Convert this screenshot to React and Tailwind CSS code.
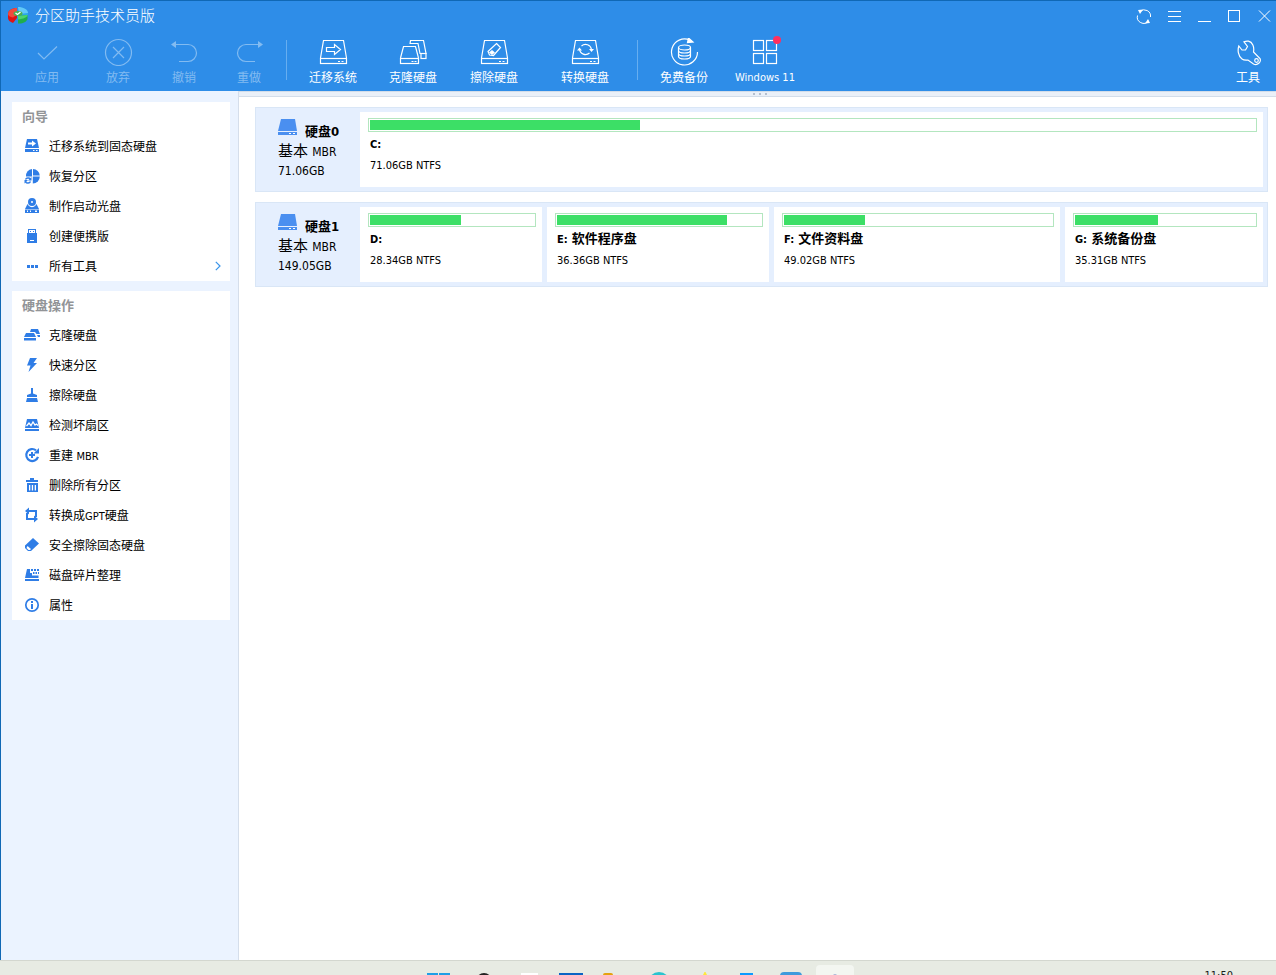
import { useState } from 'react';
import clsx from 'clsx';

// outline of a hard disk, shared by several toolbar icons
function DriveOutline() {
  return (
    <>
      <path d="M1.5 20L4.5 2.5h20L27.5 20" />
      <rect x="1.5" y="20.5" width="26" height="5" />
      <path d="M19 23.5h2M22.5 23.5h2" />
    </>
  );
}

function ToolIcon({ children }) {
  return (
    <svg width="30" height="28" viewBox="-1 0 30 28" fill="none" stroke="currentColor" strokeWidth="1.2" aria-hidden="true">
      {children}
    </svg>
  );
}

const editTools = [
  { label: '应用', width: 'w-[66px]', icon: <path d="M5 15l6 6L24 8.500" /> },
  {
    label: '放弃',
    width: 'w-[76px]',
    icon: (
      <>
        <circle cx="14.500" cy="14.500" r="13" />
        <path d="M9 9l11 11M20 9L9 20" />
      </>
    ),
  },
  {
    label: '撤销',
    width: 'w-[56px]',
    icon: (
      <>
        <path d="M5 6.500h13a8.500 8.500 0 0 1 0 17H9" />
        <path d="M1 6.500L6 3v7z" fill="currentColor" stroke="none" />
      </>
    ),
  },
  {
    label: '重做',
    width: 'w-[74px]',
    icon: (
      <>
        <path d="M23 6.500H11a8.500 8.500 0 0 0 0 17h9" />
        <path d="M28 6.500L23 3v7z" fill="currentColor" stroke="none" />
      </>
    ),
  },
];

const diskTools = [
  {
    label: '迁移系统',
    width: 'w-[80px]',
    icon: (
      <>
        <DriveOutline />
        <path d="M7.500 9.500h8v-3l6 5-6 5v-3h-8z" />
      </>
    ),
  },
  {
    label: '克隆硬盘',
    width: 'w-[80px]',
    icon: (
      <>
        <path d="M1.500 20L4.500 8.500h12L19.500 20" />
        <rect x="1.500" y="20.500" width="18" height="5" />
        <path d="M12.500 23.500h2M15.500 23.500h2" />
        <path d="M11 6l.5-3.500h13l2.500 13h-6L19 5.500h-8" />
        <rect x="22" y="15.500" width="5" height="5" />
      </>
    ),
  },
  {
    label: '擦除硬盘',
    width: 'w-[82px]',
    icon: (
      <>
        <DriveOutline />
        <path d="M16.500 5.500l4 4-7 8-4-.5-1.500-3.500z" />
        <path d="M12 12l3 2.500-3 2.500-3-2.500z" fill="currentColor" stroke="none" />
      </>
    ),
  },
  {
    label: '转换硬盘',
    width: 'w-[100px]',
    icon: (
      <>
        <DriveOutline />
        <path d="M10.500 8a6 6 0 0 1 10 3.500M18.500 15a6 6 0 0 1-10-4" />
        <path d="M18 11h5l-2.500 3zM6 12.500h5l-2.500-3z" fill="currentColor" stroke="none" />
      </>
    ),
  },
];

const extraTools = [
  {
    label: '免费备份',
    width: 'w-[80px]',
    icon: (
      <>
        <path d="M20 2.200A13 13 0 1 0 27.500 14" />
        <path d="M18.500 0L23 4l-5.500.5z" fill="currentColor" />
        <ellipse cx="14.500" cy="9.500" rx="6" ry="2.500" />
        <path d="M8.500 9.500v9c0 3.300 12 3.300 12 0v-9M8.500 12.500c0 3.300 12 3.300 12 0M8.500 15.500c0 3.300 12 3.300 12 0" />
      </>
    ),
  },
  {
    label: 'Windows 11',
    width: 'w-[82px]',
    dot: true,
    icon: (
      <>
        <rect x="2.500" y="2.500" width="10" height="10" />
        <rect x="15.500" y="2.500" width="10" height="10" />
        <rect x="2.500" y="15.500" width="10" height="10" />
        <rect x="15.500" y="15.500" width="10" height="10" />
      </>
    ),
  },
];

const settingsTool = {
  label: '工具',
  width: 'w-[56px]',
  icon: (
    <>
      <path d="M10 3.800L13.500 8.500 11.500 12H8L4.800 8C3.500 12 4 18 8 21c2 1.500 4 1.200 6 1l5.500 4c4 2 8-2 6.500-5.500L19.500 14C20.500 9 18.500 4 14.500 3.200c-2-.4-3 0-4.500.6z" />
      <circle cx="22.500" cy="22.500" r="1.800" />
    </>
  ),
};

const wizardItems = [
  {
    label: '迁移系统到固态硬盘',
    icon: (
      <>
        <path d="M3 1h10l2 9H1z" />
        <path d="M1 11h14v3H1z" />
        <path d="M4 4.500h4V2.500l4 3-4 3v-2H4zM9 12h1.500v1H9zM12 12h1.500v1H12z" fill="#fff" />
      </>
    ),
  },
  {
    label: '恢复分区',
    icon: (
      <>
        <path d="M8 1v7.500H2A6.800 6.800 0 0 1 8 1z" />
        <path d="M9 1a6.800 6.800 0 0 1 6.800 6.500H9z" />
        <path d="M15.800 8.500a7 7 0 0 1-7 7V8.500z" />
        <path d="M1.500 11.500a3 3 0 0 1 5-.5M6.500 13.500a3 3 0 0 1-5 .5" fill="none" stroke="currentColor" strokeWidth="1.500" />
        <path d="M7.500 9v3.500H4zM.5 15.500V12H4z" />
      </>
    ),
  },
  {
    label: '制作启动光盘',
    icon: (
      <>
        <path d="M3.500 6L1 11h14l-2.500-5-1 1.500a4.500 4.500 0 0 1-7 0z" />
        <path d="M8 0a4 4 0 1 0 0 8 4 4 0 0 0 0-8zm0 3a1 1 0 1 1 0 2 1 1 0 0 1 0-2z" fillRule="evenodd" />
        <path d="M1 11.500h14V15H1z" />
        <path d="M3 12.500h1V14H3zM6 12.500h1V14H6zM11 12.500h2V14h-2z" fill="#fff" />
      </>
    ),
  },
  {
    label: '创建便携版',
    icon: (
      <>
        <path d="M4 1h8v4h1v10H3V5h1z" />
        <path d="M5 2h6v3H5z" fill="#fff" />
        <path d="M6 3h1v1H6zM9 3h1v1H9z" />
        <path d="M6 12h4v1H6z" fill="#fff" />
      </>
    ),
  },
  { label: '所有工具', more: true, icon: <path d="M3 7h3v3H3zM7 7h3v3H7zM11 7h3v3h-3z" /> },
];

const diskItems = [
  {
    label: '克隆硬盘',
    icon: (
      <>
        <path d="M7 2h7l2 5h-3.500L11 5H6zM13 8h3v2h-2zM2 6h8l2 4H0z" />
        <path d="M0 11h12v2.500H0z" />
      </>
    ),
  },
  { label: '快速分区', icon: <path d="M6 1h7L9.500 6H13L4.500 15l2-6.500H3z" /> },
  { label: '擦除硬盘', icon: <path d="M7 1h2v5.500l4 1.500v2H3V8l4-1.500zM3 11h10l1 4H2z" /> },
  {
    label: '检测坏扇区',
    icon: (
      <>
        <path d="M3 2h10l2 9H1zM1 12h14v2H1z" />
        <path d="M2.500 9L5 6l2 2.500L9 5l2 3 1.500-1 1.500 1.500" fill="none" stroke="#fff" strokeWidth="1.300" />
      </>
    ),
  },
  {
    label: '重建',
    latin: 'MBR',
    spaced: true,
    icon: (
      <>
        <path d="M12 3.300a6 6 0 1 0 2 6.500" fill="none" stroke="currentColor" strokeWidth="2.200" />
        <path d="M15 1v5.500H9.500z" />
        <path d="M7 5h2v2h2v2H9v2H7V9H5V7h2z" />
      </>
    ),
  },
  { label: '删除所有分区', icon: <path d="M6 1h4v2h4v2H2V3h4zM3 6h11v9H3zm2 2v5.500h1.300V8zm2.800 0v5.500h1.300V8zm2.900 0v5.500H12V8z" fillRule="evenodd" /> },
  {
    label: '转换成',
    latin: 'GPT',
    tail: '硬盘',
    icon: (
      <>
        <path d="M3 6v6h7M5 4h7v6" fill="none" stroke="currentColor" strokeWidth="2" />
        <path d="M1 4l4-3.500v7zM14 12l-4 3.500v-7z" />
      </>
    ),
  },
  {
    label: '安全擦除固态硬盘',
    icon: (
      <>
        <path d="M9 1l6 5.500L7 14H4L1 11V8.500z" />
        <path d="M3.500 9L7 12l-1 1H4.500L2.500 11z" fill="#fff" />
      </>
    ),
  },
  {
    label: '磁盘碎片整理',
    icon: (
      <>
        <path d="M3 2h3v4h2v2.500h6.500V11H1zM1 12h14v2H1z" />
        <path d="M7 2h2v2H7zM10 2h2v2h-2zM13 2h2v2h-2zM9 5h1.500v2H9zM11.500 5h1.500v2h-1.500zM14 5h1v2h-1z" />
      </>
    ),
  },
  {
    label: '属性',
    icon: (
      <>
        <circle cx="8" cy="8" r="6.200" fill="none" stroke="currentColor" strokeWidth="1.700" />
        <path d="M7 4h2v2H7zM7 7h2v5H7z" />
      </>
    ),
  },
];

const disks = [
  {
    name: '硬盘0',
    size: '71.06GB',
    partitions: [{ letter: 'C:', name: '', size: '71.06GB NTFS', weight: 1, used: 30.5 }],
  },
  {
    name: '硬盘1',
    size: '149.05GB',
    partitions: [
      { letter: 'D:', name: '', size: '28.34GB NTFS', weight: 182, used: 55.5 },
      { letter: 'E:', name: '软件程序盘', size: '36.36GB NTFS', weight: 222, used: 83.3 },
      { letter: 'F:', name: '文件资料盘', size: '49.02GB NTFS', weight: 286, used: 30.2 },
      { letter: 'G:', name: '系统备份盘', size: '35.31GB NTFS', weight: 198, used: 46.1 },
    ],
  },
];

const windowButtons = [
  {
    label: '刷新',
    icon: (
      <>
        <path d="M4 3.500A6.300 6.300 0 0 1 14.500 9M12.500 13A6.300 6.300 0 0 1 1.500 7.500" />
        <path d="M2 2l5-.5L4 6zM14 15l-5 .5 3-4.500z" fill="currentColor" stroke="none" />
      </>
    ),
  },
  { label: '菜单', icon: <path d="M2 3.500h13M2 8.500h13M2 13.500h13" /> },
  { label: '最小化', icon: <path d="M2 13.500h13" /> },
  { label: '最大化', icon: <rect x="2.500" y="2.500" width="11" height="11" /> },
  { label: '关闭', icon: <path d="M3 2.500l11 11M14 2.500L3 13.500" /> },
];

function ToolButton({ tool, disabled }) {
  return (
    <button
      type="button"
      disabled={disabled}
      className={clsx('flex flex-col items-center gap-1 pt-[7px]', tool.width, disabled ? 'text-[#82bbf1]' : 'text-white')}
    >
      <span className="relative">
        <ToolIcon>{tool.icon}</ToolIcon>
        {tool.dot && <span className="absolute -top-0.5 -right-px size-2 rounded-full bg-[#ff2f5f]" />}
      </span>
      <span className={clsx('whitespace-nowrap leading-4', tool.dot ? 'text-[11px]' : 'text-xs')}>{tool.label}</span>
    </button>
  );
}

function Separator() {
  return <span className="mt-[9px] h-10 w-px bg-[#67aef0]" />;
}

function Header() {
  return (
    <header className="border-t border-[#1068b5] bg-[#2e8de8] text-white">
      <div className="flex h-[30px] items-center pr-1 pl-[7px]">
        <svg width="20" height="18" viewBox="0 0 20 18" aria-hidden="true">
          <path d="M9 1C4 1 0 3.500 0 7v4c0 2 2 4 5 5l4-5z" fill="#e01212" />
          <path d="M9 1C4 1 0 3.500 0 7c0 2 2 3 5 3.500l4-3z" fill="#f04a3c" />
          <path d="M10 0c5 0 10 2.500 10 6v4l-9-2z" fill="#2aa6e8" />
          <path d="M10 0c5 0 10 2.500 10 6l-9 1z" fill="#62c8f7" />
          <path d="M10 9l9.500-1v4c-1 3-5 5-9.500 4.500z" fill="#1fae4b" />
          <path d="M10 9l9.500-1c0 2-4 4-9.500 4.500z" fill="#4bd46c" />
          <ellipse cx="10" cy="6.500" rx="4.500" ry="2.500" fill="#4caf50" />
          <path d="M7.500 6l2 1.500 3-2.500" fill="none" stroke="#fff" strokeWidth="1.300" />
        </svg>
        <h1 className="ml-[7px] flex-1 text-[15px] leading-5 font-light">分区助手技术员版</h1>
        <div className="flex gap-3.5">
          {windowButtons.map((btn) => (
            <button key={btn.label} type="button" aria-label={btn.label}>
              <svg width="16" height="16" viewBox="0 0 16 16" fill="none" stroke="currentColor" strokeWidth="1" className="block overflow-visible" aria-hidden="true">
                {btn.icon}
              </svg>
            </button>
          ))}
        </div>
      </div>
      <nav className="flex h-[60px] items-start pl-[13px]">
        {editTools.map((tool) => (
          <ToolButton key={tool.label} tool={tool} disabled />
        ))}
        <Separator />
        <div className="flex pr-0.5 pl-1.5">
          {diskTools.map((tool) => (
            <ToolButton key={tool.label} tool={tool} />
          ))}
        </div>
        <Separator />
        <div className="flex pl-1.5">
          {extraTools.map((tool) => (
            <ToolButton key={tool.label} tool={tool} />
          ))}
        </div>
        <div className="ml-auto">
          <ToolButton tool={settingsTool} />
        </div>
      </nav>
    </header>
  );
}

function SidePanel({ title, items }) {
  return (
    <section className="bg-white">
      <h2 className="h-[29px] pl-2.5 text-[13px] leading-[30px] font-bold text-[#929497]">{title}</h2>
      <ul>
        {items.map((item) => (
          <li key={item.label}>
            <button type="button" className="flex h-[30px] w-full items-center pr-[9px] pl-3 text-left text-xs text-black">
              <svg width="16" height="16" viewBox="0 0 16 16" fill="currentColor" className="text-[#2f7de6]" aria-hidden="true">
                {item.icon}
              </svg>
              <span className="ml-[9px] flex-1 pt-0.5 leading-[18px]">
                {item.label}
                {item.spaced && ' '}
                {item.latin && <span className="text-[11px] leading-none">{item.latin}</span>}
                {item.tail}
              </span>
              {item.more && (
                <svg width="6" height="10" viewBox="0 0 6 10" fill="none" stroke="#3a95ea" strokeWidth="1.200" aria-hidden="true">
                  <path d="M.8.800L5 5 .8 9.200" />
                </svg>
              )}
            </button>
          </li>
        ))}
      </ul>
    </section>
  );
}

function Partition({ part, selected, onSelect }) {
  return (
    <button
      type="button"
      aria-pressed={selected}
      onClick={onSelect}
      className="flex min-w-0 flex-col bg-white pt-1.5 pr-1.5 pb-2.5 pl-2 text-left text-black"
    >
      <span className="block h-3.5 w-full border border-[#b3e6bf] p-px">
        <span className="block h-full bg-[#3cdf66]" style={{ width: `${part.used}%` }} />
      </span>
      <span className="mt-0.5 block h-[21px] w-full truncate pl-0.5 text-[11px] leading-[21px] font-bold">
        {part.letter}
        {part.name && <span className="text-[13px] leading-none"> {part.name}</span>}
      </span>
      <span className="mb-px block h-[21px] w-full truncate pl-0.5 text-[11px] leading-[21px]">{part.size}</span>
    </button>
  );
}

function DiskRow({ disk, selected, setSelected }) {
  // column widths follow the partition sizes
  const columns = disk.partitions.map((part) => `minmax(0, ${part.weight}fr)`).join(' ');

  return (
    <section className="flex border border-[#d9e6f6] bg-[#e5effe] py-1 pr-1">
      <div className="w-[104px] shrink-0 pt-1.5 pl-[22px] text-black">
        <div className="flex items-start">
          <svg width="20" height="17" viewBox="0 0 20 17" aria-hidden="true">
            <path d="M3 1h14l2 12H0z" fill="#4a8ff0" />
            <path d="M0 14h19v3H0z" fill="#4a8ff0" />
            <path d="M11 15h2v1h-2zM15 15h2v1h-2z" fill="#fff" />
          </svg>
          <h3 className="ml-[7px] pt-1 text-[13px] leading-5 font-bold">{disk.name}</h3>
        </div>
        <p className="text-[15px] leading-[19px]">
          基本 <span className="text-xs leading-none">MBR</span>
        </p>
        <p className="text-xs leading-5">{disk.size}</p>
      </div>
      <div className="grid min-w-0 flex-1 gap-[5px]" style={{ gridTemplateColumns: columns }}>
        {disk.partitions.map((part) => (
          <Partition key={part.letter} part={part} selected={selected === part.letter} onSelect={() => setSelected(part.letter)} />
        ))}
      </div>
    </section>
  );
}

const taskbarApps = [
  { label: '开始', icon: <path d="M0 1h11v11H0zM12 1h11v11H12z" fill="#1f9fe6" /> },
  { label: '搜索', icon: <circle cx="13" cy="9" r="7" fill="none" stroke="#222" strokeWidth="2" /> },
  { label: '任务视图', icon: <rect x="6" y="1" width="17" height="16" fill="#fff" /> },
  { label: '邮件', icon: <rect x="0" y="1" width="24" height="16" fill="#0a64c4" /> },
  { label: '文件资源管理器', icon: <rect x="0" y="1" width="10" height="16" rx="2" fill="#e5a20f" /> },
  { label: 'Edge', icon: <circle cx="12" cy="11" r="11" fill="#2bc4cf" /> },
  { label: '收藏', icon: <path d="M14-1l5 10H9z" fill="#ffe83a" /> },
  { label: '应用商店', icon: <rect x="5" y="1" width="13" height="16" fill="#0c9bff" /> },
  { label: '设置', icon: <rect x="1" y="0" width="22" height="17" rx="4" fill="#3f9bdc" /> },
  { label: '分区助手', active: true, icon: <path d="M10 3q2-2 4 0v3h-4z" fill="#a9b5d6" /> },
];

function Taskbar() {
  return (
    <footer className="grid h-[15px] grid-cols-[1fr_auto_1fr] overflow-hidden border-t border-[#d3d7cf] bg-[#e7ebe3]">
      <span />
      <div className="flex pr-0.5">
        {taskbarApps.map((app) => (
          <div key={app.label} className="w-11 px-[3px] pt-1">
            <button
              type="button"
              aria-label={app.label}
              className={clsx('flex h-10 w-full justify-center rounded pt-[7px]', app.active && 'bg-[#f3f6f1]')}
            >
              <svg width="24" height="24" viewBox="0 0 24 24" aria-hidden="true">
                {app.icon}
              </svg>
            </button>
          </div>
        ))}
      </div>
      <time className="pt-[7px] pr-[43px] text-right text-[11px] leading-4 text-[#1a1a1a]">11:50</time>
    </footer>
  );
}

export default function App() {
  const [selected, setSelected] = useState('');

  return (
    <div className="flex min-h-screen flex-col bg-white font-['DejaVu_Sans_Condensed','Noto_Sans_CJK_SC',sans-serif]">
      <div className="flex flex-1 flex-col border-l border-[#1068b5]">
        <Header />
        <div className="flex flex-1">
          <aside className="flex w-[238px] shrink-0 flex-col gap-2.5 border-r border-[#d5deeb] bg-[#ebf3ff] pt-[11px] pr-2 pl-[11px]">
            <SidePanel title="向导" items={wizardItems} />
            <SidePanel title="硬盘操作" items={diskItems} />
          </aside>
          <main className="min-w-0 flex-1">
            <div className="flex h-1.5 items-center justify-center gap-1 border-y border-[#d3dde9] bg-[#eaf0f8] pl-1">
              <span className="size-0.5 bg-[#b5bfce]" />
              <span className="size-0.5 bg-[#b5bfce]" />
              <span className="size-0.5 bg-[#b5bfce]" />
            </div>
            <div className="flex flex-col gap-2.5 pt-2.5 pr-2 pl-4">
              {disks.map((disk) => (
                <DiskRow key={disk.name} disk={disk} selected={selected} setSelected={setSelected} />
              ))}
            </div>
          </main>
        </div>
      </div>
      <Taskbar />
    </div>
  );
}
